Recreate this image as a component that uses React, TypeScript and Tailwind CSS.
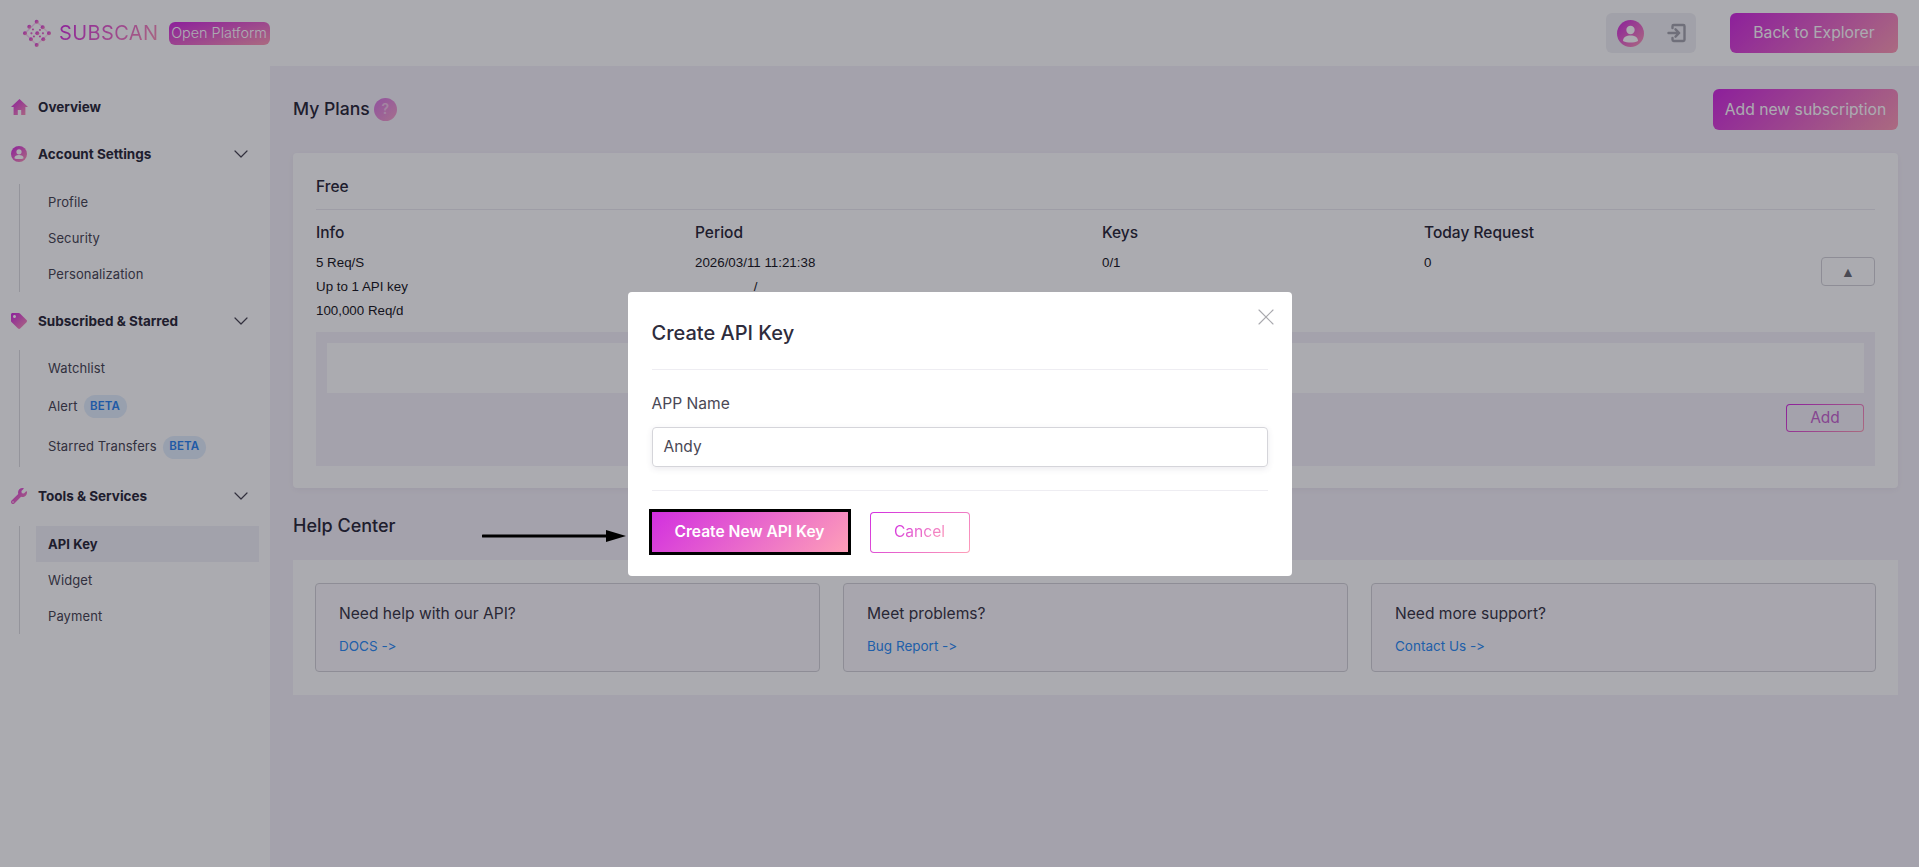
import React from 'react';
import { ChevronDown, X } from 'lucide-react';
import { FaTag, FaWrench } from 'react-icons/fa';

const gradientBtn = 'bg-[linear-gradient(135deg,#d22fe0,#fe9fb8)]';
const gradientBorder =
  'border border-transparent [background:linear-gradient(#fff,#fff)_padding-box,linear-gradient(135deg,#d22fe0,#fe9fb8)_border-box]';
const iconFill = { fill: 'url(#brand)' };

const Beta = () => (
  <span className="ml-[6px] flex h-[23px] w-[43px] items-center justify-center rounded-full bg-[#e3eefc] text-[11.5px] font-semibold text-[#2f86f0]">
    BETA
  </span>
);

const Logo = () => {
  const big = [
    [13.7, 2.7],
    [6.3, 7.7],
    [19.7, 8.3],
    [2, 14.3],
    [14.3, 14.3],
    [26, 14.3],
    [8, 20.3],
    [20.3, 20.3],
    [13.7, 26],
  ];
  const small = [
    [10, 10.5],
    [17, 11],
    [8.5, 14.3],
    [20, 14.3],
    [11, 17.5],
    [17, 17.5],
  ];
  return (
    <svg width="29" height="29" viewBox="0 0 29 29">
      <path
        d="M13.7 2.7 2 14.3l11.7 11.7L26 14.3Z"
        fill="none"
        stroke="url(#brand)"
        strokeOpacity="0.25"
        strokeWidth="1.5"
      />
      {big.map(([x, y], i) => (
        <circle key={i} cx={x} cy={y} r="2" fill="url(#brand)" />
      ))}
      {small.map(([x, y], i) => (
        <circle key={i} cx={x} cy={y} r="1.1" fill="url(#brand)" />
      ))}
    </svg>
  );
};

const SectionHeader = ({ icon, label, mt, chevron = true }: { icon: React.ReactNode; label: string; mt: string; chevron?: boolean }) => (
  <div className={`flex h-6 items-center pl-[11px] pr-[17px] ${mt}`}>
    <span className="flex w-[27px] items-center">{icon}</span>
    <span className="flex-1 text-[13.5px] font-bold text-[#2e2c3c]">{label}</span>
    {chevron && <ChevronDown size={24} strokeWidth={1.2} className="text-[#4a4855]" />}
  </div>
);

const SubList = ({ mt, children }: { mt: string; children: React.ReactNode }) => (
  <div className={`ml-[19px] border-l border-[#dcdce0] pl-[16px] ${mt}`}>{children}</div>
);

const SubItem = ({ label, active, h = 'h-9', badge }: { label: string; active?: boolean; h?: string; badge?: boolean }) => (
  <div
    className={`flex w-[223px] items-center px-3 pt-px text-[13px] tracking-[0.1px] ${h} ${
      active ? 'bg-[#f2f1f7] font-bold text-[#2e2c3c]' : 'text-[#4a4855]'
    }`}
  >
    {label}
    {badge && <Beta />}
  </div>
);

const HelpCard = ({ title, link }: { title: string; link: string }) => (
  <div className="h-[89px] rounded border border-[#d4d3d8] bg-[#fbf8fc] px-[23px] pt-[20px]">
    <div className="text-[15.6px] leading-[20px] text-[#3c3a48]">{title}</div>
    <div className="mt-[12px] text-[13.5px] leading-[20px] text-[#2f8ef5] [font-variant-ligatures:none] [font-feature-settings:'calt'_0]">
      {link}
    </div>
  </div>
);

export default function App() {
  return (
    <div className="relative h-screen overflow-hidden bg-white font-[Inter,sans-serif] text-[#2e2c3c]">
      <svg width="0" height="0" className="absolute">
        <defs>
          <linearGradient id="brand" x1="0" y1="0" x2="1" y2="1">
            <stop offset="0" stopColor="#d22fe0" />
            <stop offset="1" stopColor="#fe9fb8" />
          </linearGradient>
        </defs>
      </svg>

      <header className="flex h-[66px] items-center pl-[23px] pr-[21px]">
        <Logo />
        <span className="ml-[7px] bg-[linear-gradient(135deg,#d22fe0,#fe9fb8)] bg-clip-text text-[20px] font-normal tracking-[0.4px] text-transparent">
          SUBSCAN
        </span>
        <span className="ml-[10px] flex h-[23px] w-[101px] items-center justify-center rounded-md bg-[linear-gradient(165deg,#d22fe0,#fe9fb8)] text-[14.4px] font-light text-white">
          Open Platform
        </span>
        <div className="ml-auto flex h-10 w-[90px] items-center justify-between rounded-md bg-[#f0f0f4] pl-[11px] pr-[9px]">
          <svg width="27" height="27" viewBox="0 0 27 27">
            <circle cx="13.5" cy="13.5" r="13.5" fill="url(#brand)" />
            <circle cx="13.5" cy="10" r="4.2" fill="#fff" />
            <path d="M6 21c0-4 3.4-5.6 7.5-5.6S21 17 21 21c-2 1-5 1.5-7.5 1.5S8 22 6 21Z" fill="#fff" />
          </svg>
          <svg width="20" height="20" viewBox="0 0 20 20" fill="none" stroke="#a6a6ae" strokeWidth="2.4" strokeLinecap="round" strokeLinejoin="round">
            <path d="M5.5 5V3.2a1.2 1.2 0 0 1 1.2-1.2h9.6a1.2 1.2 0 0 1 1.2 1.2v13.6a1.2 1.2 0 0 1-1.2 1.2H6.7a1.2 1.2 0 0 1-1.2-1.2V15" />
            <path d="M1.5 10h10.5M8.5 6.3 12.2 10l-3.7 3.7" />
          </svg>
        </div>
        <button className={`ml-[34px] h-10 w-[168px] rounded-md text-[15.7px] text-white ${gradientBtn}`}>
          Back to Explorer
        </button>
      </header>

      <div className="flex h-[801px]">
        <aside className="w-[270px] shrink-0 pt-[29px]">
          <SectionHeader
            mt=""
            chevron={false}
            label="Overview"
            icon={
              <svg width="17" height="16" viewBox="0 0 17 16">
                <path d="M8.5 0 0 8h2.6v8h4.2v-5h3.4v5h4.2V8H17Z" fill="url(#brand)" />
              </svg>
            }
          />
          <SectionHeader
            mt="mt-[23px]"
            label="Account Settings"
            icon={
              <svg width="16" height="16" viewBox="0 0 16 16">
                <circle cx="8" cy="8" r="8" fill="url(#brand)" />
                <circle cx="8" cy="5.8" r="2.6" fill="#fff" />
                <path d="M3.4 12.2c0-2.2 2-3.2 4.6-3.2s4.6 1 4.6 3.2c-1.2.6-3 .9-4.6.9s-3.4-.3-4.6-.9Z" fill="#fff" />
              </svg>
            }
          />
          <SubList mt="mt-[18px]">
            <SubItem label="Profile" />
            <SubItem label="Security" />
            <SubItem label="Personalization" />
          </SubList>
          <SectionHeader mt="mt-[17px]" label="Subscribed & Starred" icon={<FaTag size={16} style={iconFill} />} />
          <SubList mt="mt-[17px]">
            <SubItem label="Watchlist" />
            <SubItem label="Alert" h="h-10" badge />
            <SubItem label="Starred Transfers" h="h-[41px]" badge />
          </SubList>
          <SectionHeader mt="mt-[17px]" label="Tools & Services" icon={<FaWrench size={16} style={iconFill} />} />
          <SubList mt="mt-[18px]">
            <SubItem label="API Key" active />
            <SubItem label="Widget" />
            <SubItem label="Payment" />
          </SubList>
        </aside>

        <main className="flex-1 bg-[#f5f2f9] pl-[23px] pr-[21px] pt-[23px]">
          <div className="flex h-[41px] items-center justify-between">
            <div className="flex items-center">
              <span className="text-[17.6px] font-medium">My Plans</span>
              <span className="ml-[4px] flex h-[23px] w-[23px] items-center justify-center rounded-full bg-[linear-gradient(135deg,#d87ae4,#f6a6cc)] text-sm font-semibold text-[#f3c6ea]">
                ?
              </span>
            </div>
            <button className={`h-[41px] w-[185px] rounded-md text-[15.7px] text-white ${gradientBtn}`}>
              Add new subscription
            </button>
          </div>

          <section className="mt-[23px] h-[335px] rounded bg-white px-[23px] pt-[22px] shadow-[0_2px_6px_rgba(80,60,110,0.06)]">
            <div className="border-b border-[#eceaf0] pb-[10px] text-[15.5px] font-medium leading-6">Free</div>
            <div className="mt-[13px] grid grid-cols-[379px_407px_322px_1fr] text-[15.5px] font-medium leading-5">
              <div>Info</div>
              <div>Period</div>
              <div>Keys</div>
              <div>Today Request</div>
            </div>
            <div className="relative mt-[8px] grid grid-cols-[379px_407px_322px_1fr] font-['Liberation_Sans',Arial,sans-serif] text-[13.33px] leading-6 text-[#1c1b26]">
              <div>
                <div>5 Req/S</div>
                <div>Up to 1 API key</div>
                <div>100,000 Req/d</div>
              </div>
              <div>
                <div>2026/03/11 11:21:38</div>
                <div className="w-[121px] text-center">/</div>
              </div>
              <div>0/1</div>
              <div className="flex items-start justify-between">
                <span>0</span>
                <span className="mt-[6px] flex h-[29px] w-[54px] items-center justify-center rounded border border-[#d4d3d8] text-sm text-[#6f6e76]">
                  ▲
                </span>
              </div>
            </div>
            <div className="mt-[9px] h-[134px] bg-[#f5f2f9] p-[11px]">
              <div className="h-[50px] bg-white" />
              <div className="mt-[11px] flex justify-end">
                <button className="h-[28px] w-[78px] rounded border border-transparent text-[15.5px] text-[#c868d0] [background:linear-gradient(#f5f2f9,#f5f2f9)_padding-box,linear-gradient(135deg,#d22fe0,#fe9fb8)_border-box]">
                  Add
                </button>
              </div>
            </div>
          </section>

          <h2 className="mt-[26px] text-lg font-medium leading-6">Help Center</h2>
          <section className="mt-[22px] grid h-[135px] grid-cols-3 gap-[23px] bg-white px-[22px] py-[23px]">
            <HelpCard title="Need help with our API?" link="DOCS ->" />
            <HelpCard title="Meet problems?" link="Bug Report ->" />
            <HelpCard title="Need more support?" link="Contact Us ->" />
          </section>
        </main>
      </div>

      {/* dimmed backdrop with the dialog on top */}
      <div className="absolute inset-0 flex items-center justify-center bg-[#00000f]/[0.33]">
        <div className="relative w-[664px] rounded bg-white px-6 pb-[23px] pt-[24px]">
          <X size={28} strokeWidth={1} className="absolute right-[12px] top-[11px] text-[#a9a9ae]" />
          <div className="border-b border-[#eeedf2] pb-[19px] text-xl font-medium leading-[34px]">Create API Key</div>
          <div className="mt-[24px] text-[15.6px] leading-5 text-[#4a4855]">APP Name</div>
          <div className="mt-[13px] flex h-10 items-center rounded border border-[#d5d5da] px-[11px] text-[15.5px] text-[#4a4855] shadow-[0_2px_6px_rgba(60,50,90,0.1)]">
            Andy
          </div>
          <div className="mt-[23px] flex items-center gap-[22px] border-t border-[#eeedf2] pt-[21px]">
            <div className="relative">
              {/* hand-drawn annotation arrow */}
              <svg width="144" height="14" viewBox="0 0 144 14" className="absolute left-[-170px] top-[17px]">
                <path d="M1 7h125" stroke="#000" strokeWidth="3" strokeLinecap="round" />
                <path d="M124 1l20 6-20 6Z" fill="#000" />
              </svg>
              <button className={`h-[40px] w-[196px] text-[15.6px] font-semibold text-white outline-[3.5px] outline-black ${gradientBtn}`}>
                Create New API Key
              </button>
            </div>
            <button className={`h-[41px] w-[100px] rounded text-[15.6px] ${gradientBorder}`}>
              <span className="bg-[linear-gradient(135deg,#d22fe0,#fe9fb8)] bg-clip-text text-transparent">Cancel</span>
            </button>
          </div>
        </div>
      </div>
    </div>
  );
}
